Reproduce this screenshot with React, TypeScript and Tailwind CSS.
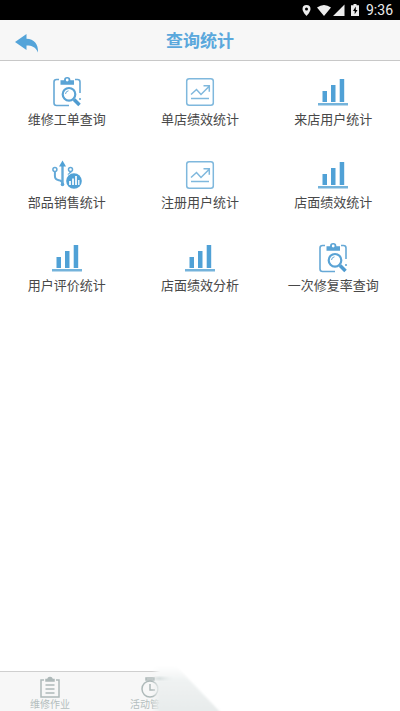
import type { ReactNode } from "react";

function ClipboardSearch() {
  return (
    <svg viewBox="0 0 30 30" className="size-[30px]" fill="none" stroke="#67a9d6" strokeWidth="1.6" aria-hidden="true">
      <path d="M7 2.500H4.500Q2 2.500 2 5V26q0 2.500 2.500 2.500H17M23 2.500h2.500Q28 2.500 28 5V16M28 21v2" />
      <path d="M8.500 3.200h3.500a3.200 3.200 0 0 1 6.400 0H22V7.800H8.500z" fill="#5aa3d5" stroke="none" />
      <circle cx="15.200" cy="3" r="1.400" fill="#fff" stroke="none" />
      <circle cx="17" cy="17.300" r="6.300" stroke="#5aa3d5" strokeWidth="2.200" />
      <path d="M13.500 17a3.500 3.500 0 0 1 3-3.200" strokeWidth="1" />
      <path d="M22 22.500l5.500 5.500" stroke="#4f9bd0" strokeWidth="3.600" />
    </svg>
  );
}

function TrendBox() {
  return (
    <svg viewBox="0 0 30 30" className="size-[30px]" fill="none" stroke="#7fb8dd" strokeWidth="1.500" aria-hidden="true">
      <rect x="1.700" y="1.700" width="26.600" height="26.600" rx="2.500" />
      <path d="M6 17.500l5.500-5 4.500 5 8-8M18.500 8.800h5.800v6" strokeWidth="1.500" />
      <path d="M6 21.500h18" />
    </svg>
  );
}

function Bars() {
  return (
    <svg viewBox="0 0 30 30" className="size-[30px]" aria-hidden="true">
      <path d="M4.500 14h4.500v11H4.500zM13 8h4.500v17H13zM21.700 2h4.500v23h-4.500z" fill="#50a1d6" />
      <path d="M0 26h30v2.500H0z" fill="#74b3db" />
    </svg>
  );
}

function UsbBars() {
  return (
    <svg viewBox="0 0 30 30" className="size-[30px]" fill="none" stroke="#63a9d8" strokeWidth="2" aria-hidden="true">
      <path d="M10.500 5v19" strokeWidth="2.400" />
      <path d="M7 6.500L10.500 .500 14 6.500z" fill="#50a1d6" stroke="none" />
      <circle cx="2.900" cy="9.500" r="2" strokeWidth="1.500" />
      <circle cx="18.500" cy="9.500" r="2" strokeWidth="1.500" />
      <path d="M2.900 12v4q0 3.500 3.900 4.200 3.700.6 3.700 3.800M18.500 12q0 1.800-2.500 3" />
      <circle cx="10.500" cy="24.500" r="1.800" fill="#5ba5d7" stroke="none" />
      <circle cx="22" cy="21" r="8.500" fill="#fff" stroke="none" />
      <circle cx="22" cy="21" r="7.800" fill="#50a1d6" stroke="none" />
      <path d="M17 21h2v4h-2zM20 18.500h2V25h-2zM23 16h2v9h-2zM26 20h1.500v5H26z" fill="#e6f2fa" stroke="none" />
    </svg>
  );
}

function MenuItem({ icon, label }: { icon: ReactNode; label: string }) {
  return (
    <button type="button" className="flex h-[83px] flex-col items-center gap-0.5">
      {icon}
      <span className="whitespace-nowrap text-[13px] leading-5">{label}</span>
    </button>
  );
}

function StatusBar() {
  return (
    <div className="flex h-5 items-center justify-end bg-black pr-[7px] text-[#ececec]">
      <svg viewBox="0 0 60 14" className="mr-[5px] h-[14px] w-[60px]" fill="currentColor" aria-hidden="true">
        <path fillRule="evenodd" d="M5.500 2A4 4 0 0 0 1.500 6c0 3 4 7 4 7s4-4 4-7a4 4 0 0 0-4-4zm0 2.500a1.500 1.500 0 1 1 0 3 1.500 1.500 0 0 1 0-3z" />
        <path d="M16 4.500q7-5 14 0L23 13zM43.500 1.500V13H32z" />
        <path fillRule="evenodd" d="M52.500 1h3v1.300H58V13h-8V2.300h2.500zm2.300 2.600L52 8h1.700v3.300L56.500 7h-1.700z" />
      </svg>
      <span className="font-[Roboto,sans-serif] text-[14px] leading-5">9:36</span>
    </div>
  );
}

const items: { label: string; icon: ReactNode }[] = [
  { label: "维修工单查询", icon: <ClipboardSearch /> },
  { label: "单店绩效统计", icon: <TrendBox /> },
  { label: "来店用户统计", icon: <Bars /> },
  { label: "部品销售统计", icon: <UsbBars /> },
  { label: "注册用户统计", icon: <TrendBox /> },
  { label: "店面绩效统计", icon: <Bars /> },
  { label: "用户评价统计", icon: <Bars /> },
  { label: "店面绩效分析", icon: <Bars /> },
  { label: "一次修复率查询", icon: <ClipboardSearch /> },
];

export default function App() {
  return (
    <div className="flex min-h-screen flex-col bg-white font-['Noto_Sans_CJK_SC',sans-serif] text-[#484848]">
      <StatusBar />
      <header className="grid h-[41px] grid-cols-[1fr_auto_1fr] items-center border-b border-[#c8c8c8] bg-[#f7f7f7]">
        <button type="button" aria-label="返回" className="ml-[15px] mt-2 w-6">
          <svg viewBox="0 0 24 20" className="h-5 w-6" fill="#54a4d9" aria-hidden="true">
            <path d="M0 8L11.500 0v4.800C19 5 23.500 10 23 18.500 20.500 13 17 11.500 11.500 11.500V16z" />
          </svg>
        </button>
        <h1 className="text-[17px] font-bold leading-6 text-[#5ba8dc]">查询统计</h1>
      </header>
      <main className="grid flex-1 grid-cols-3 content-start pt-4">
        {items.map((item) => (
          <MenuItem key={item.label} icon={item.icon} label={item.label} />
        ))}
      </main>
      <footer className="relative">
        <nav className="grid h-10 grid-cols-4 border-t border-[#cfcfcf] bg-[#f7f7f7] text-[10px] leading-3 text-[#b4bebe]">
          <button type="button" className="flex flex-col items-center pt-1">
            <svg viewBox="0 0 22 22" className="size-[22px]" fill="none" stroke="#aeb9b9" strokeWidth="1.500" aria-hidden="true">
              <path d="M5 4H2v17h18V4h-3M6.500 9h9M6.500 13h9M6.500 17h9" />
              <path d="M7 5V3.500h2a2 2 0 0 1 4 0h2V5z" fill="#aeb9b9" />
            </svg>
            <span>维修作业</span>
          </button>
          <button type="button" className="flex flex-col items-center pt-1">
            <svg viewBox="0 0 22 22" className="size-[22px]" fill="none" stroke="#aeb9b9" strokeWidth="1.500" aria-hidden="true">
              <circle cx="11" cy="13" r="8" />
              <path d="M7 2h8v2H7zM11 8v6h5" />
            </svg>
            <span>活动管理</span>
          </button>
        </nav>
        <svg viewBox="0 0 250 56" className="absolute bottom-0 left-[150px] h-14 w-[250px]" aria-hidden="true">
          <defs>
            <linearGradient id="edge" gradientUnits="userSpaceOnUse" x1="2" x2="10" y1="0" y2="0">
              <stop offset="0" stopColor="#fff" stopOpacity="0" />
              <stop offset="1" stopColor="#fff" />
            </linearGradient>
            <linearGradient id="haze" x1="0" y1="0" x2="0" y2="1">
              <stop offset="0" stopColor="#fff" />
              <stop offset=".3" stopColor="#eff2f2" />
              <stop offset="1" stopColor="#e6eaea" />
            </linearGradient>
            <linearGradient id="streak" x1="0" x2="1">
              <stop offset="0" stopColor="#bcc8c8" />
              <stop offset="1" stopColor="#e9eded" stopOpacity="0" />
            </linearGradient>
            <mask id="fade">
              <path d="M0 0h250v56H0z" fill="url(#edge)" />
            </mask>
            <filter id="soft" x="-10%" y="-10%" width="120%" height="130%">
              <feGaussianBlur stdDeviation="1" />
            </filter>
          </defs>
          <g mask="url(#fade)">
            <path d="M0 0h250v56H0z" fill="#fff" />
            <path d="M0 11h26l48 50H0z" fill="url(#haze)" filter="url(#soft)" />
            <path d="M4 22h20v3H4z" fill="url(#streak)" filter="url(#soft)" />
          </g>
        </svg>
      </footer>
    </div>
  );
}
